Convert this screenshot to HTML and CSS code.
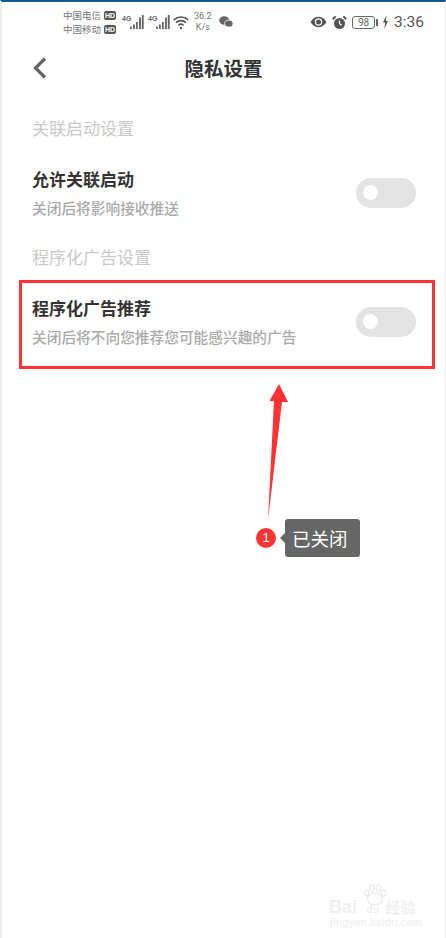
FILE: index.html
```html
<!DOCTYPE html>
<html lang="zh">
<head>
    <meta charset="UTF-8">
    <meta name="viewport" content="width=device-width, initial-scale=1.0">
    <title>隐私设置</title>
    <link rel="stylesheet" href="styles.css">
</head>
<body>
    <div class="screen">
        <div class="status-bar">
            <div class="carriers">
                <div class="carrier">中国电信<span class="hd">HD</span></div>
                <div class="carrier">中国移动<span class="hd">HD</span></div>
            </div>
            <div class="signal">
                <span class="net">4G</span>
                <svg width="15" height="16" viewBox="0 0 15 16"><path d="M0 12.500h1.800v2.500H0zM3 10.500h1.800V15H3zM6 8h1.800v7H6zM9 3.500h1.900V15H9zM11.800 1h1.900v14h-1.900z" fill="#666"/></svg>
            </div>
            <div class="signal">
                <span class="net">4G</span>
                <svg width="15" height="16" viewBox="0 0 15 16"><path d="M0 12.500h1.800v2.500H0zM3 10.500h1.800V15H3zM6 8h1.800v7H6zM9 3.500h1.900V15H9zM11.800 1h1.900v14h-1.900z" fill="#666"/></svg>
            </div>
            <svg class="wifi" width="16" height="15" viewBox="0 0 16 15" fill="none" stroke="#555" stroke-width="1.700"><path d="M.8 5C5 1 11 1 15.200 5M3 7.700C6 5.200 10 5.200 13 7.700M5.400 10.300C7 9 9 9 10.600 10.300"/><circle cx="8" cy="13" r="1.200" fill="#555" stroke="none"/></svg>
            <div class="speed">36.2<br>K/s</div>
            <svg class="wechat" width="14" height="12" viewBox="0 0 14 12"><ellipse cx="5.200" cy="4.500" rx="5" ry="4.200" fill="#666"/><ellipse cx="9.800" cy="7.600" rx="4.200" ry="3.500" fill="#666" stroke="#fff" stroke-width=".8"/></svg>
            <div class="status-right">
                <svg width="17" height="12" viewBox="0 0 17 12"><path d="M.5 6C3 2 5.600.8 8.500.8S14 2 16.500 6C14 10 11.400 11.200 8.500 11.200S3 10 .5 6z" fill="#555"/><circle cx="8.500" cy="6" r="3.700" fill="#fff"/><circle cx="8.500" cy="6" r="2.500" fill="#555"/></svg>
                <svg width="15" height="15" viewBox="0 0 15 15"><circle cx="7.500" cy="8.500" r="5.500" fill="#555"/><path d="M7.500 5.500v3.300l2.300 1.400" fill="none" stroke="#fff" stroke-width="1.100"/><path d="M.8 4.200 3.600 1.400M14.200 4.200 11.400 1.400" stroke="#555" stroke-width="2"/></svg>
                <div class="battery"><span class="battery-level">98</span></div>
                <svg class="bolt" width="7" height="14" viewBox="0 0 7 14"><path d="M4.500 0 1 7.500h2.200L2.300 14 6 6H3.800z" fill="#555"/></svg>
                <span class="clock">3:36</span>
            </div>
        </div>

        <div class="title-bar">
            <svg class="back" width="16" height="24" viewBox="0 0 16 24"><path d="M13 2.500 3.500 12 13 21.500" fill="none" stroke="#666" stroke-width="3.200"/></svg>
            <h1>隐私设置</h1>
        </div>

        <div class="section-label">关联启动设置</div>
        <div class="setting">
            <div>
                <div class="setting-title">允许关联启动</div>
                <div class="setting-desc">关闭后将影响接收推送</div>
            </div>
            <div class="toggle"><span class="knob"></span></div>
        </div>

        <div class="section-label">程序化广告设置</div>
        <div class="setting">
            <div>
                <div class="setting-title">程序化广告推荐</div>
                <div class="setting-desc">关闭后将不向您推荐您可能感兴趣的广告</div>
            </div>
            <div class="toggle"><span class="knob"></span></div>
        </div>

        <!-- annotation layer -->
        <div class="mark-box"></div>
        <svg class="mark-arrow" width="24" height="140" viewBox="0 0 24 140"><path d="M14 0 23 18 17 18 3 136 9 17 4.500 17z" fill="#ff3333"/></svg>
        <div class="mark-num">1</div>
        <div class="mark-tip">已关闭</div>

        <div class="watermark">
            <svg class="paw" width="24" height="22" viewBox="0 0 24 22" fill="none" stroke="#ececec" stroke-width="1.300"><ellipse cx="12" cy="15" rx="7.500" ry="6"/><ellipse cx="3.500" cy="9" rx="2.300" ry="3"/><ellipse cx="9" cy="4" rx="2.300" ry="3"/><ellipse cx="15.500" cy="4" rx="2.300" ry="3"/><ellipse cx="20.500" cy="9" rx="2.300" ry="3"/></svg>
            <div class="wm-logo">Bai<span class="wm-du">du</span><span class="wm-zh">经验</span></div>
            <div class="wm-url">jingyan.baidu.com</div>
        </div>
    </div>
</body>
</html>
```

FILE: styles.css
```css
body {
    margin: 0;
    background: #fff;
    font-family: "Noto Sans CJK SC", "Liberation Sans", sans-serif;
    overflow: hidden;
}

.screen {
    position: relative;
    box-sizing: border-box;
    width: 446px;
    height: 938px;
    border-top: 2px solid #0f5a8a;
    border-left: 2px solid #eeeeee;
    border-right: 1px solid #eeeeee;
    overflow: hidden;
}

.status-bar {
    display: flex;
    align-items: center;
    height: 40px;
    padding-left: 61px;
    padding-right: 21px;
    color: #666;
}

.carriers {
    width: 59px;
    font-size: 9.500px;
    line-height: 14px;
    color: #777;
}

.carrier {
    display: flex;
    align-items: center;
    white-space: nowrap;
}

.hd {
    margin-left: 3px;
    padding: 0 1px;
    background: #555;
    border-radius: 2px;
    color: #fff;
    font-family: "Liberation Sans", sans-serif;
    font-size: 7px;
    line-height: 9px;
    font-weight: bold;
}

.signal {
    display: flex;
    align-items: flex-end;
    width: 26px;
    height: 16px;
}

.net {
    width: 8px;
    font-family: "Liberation Sans", sans-serif;
    font-size: 7px;
    font-weight: bold;
    line-height: 8px;
    align-self: flex-start;
    margin-top: 1px;
}

.wifi {
    margin-left: -1px;
}

.speed {
    margin-left: 5px;
    font-family: "Roboto", sans-serif;
    font-size: 9px;
    line-height: 11px;
    text-align: center;
    color: #777;
}

.wechat {
    margin-left: 7px;
}

.status-right {
    display: flex;
    align-items: center;
    margin-left: auto;
    gap: 5px;
}

.battery {
    position: relative;
    box-sizing: border-box;
    width: 23px;
    height: 13px;
    border: 1px solid #666;
    border-radius: 3px;
    text-align: center;
}

.battery::after {
    content: "";
    position: absolute;
    right: -4px;
    top: 2px;
    width: 2px;
    height: 7px;
    background: #666;
}

.battery-level {
    display: block;
    font-family: "Roboto", sans-serif;
    font-size: 10px;
    line-height: 11px;
    color: #666;
}

.bolt {
    margin-left: 2px;
}

.clock {
    font-family: "Roboto", sans-serif;
    font-size: 15.500px;
    color: #555;
}

.title-bar {
    position: relative;
    display: flex;
    align-items: center;
    justify-content: center;
    height: 50px;
    margin-bottom: 16px;
}

.back {
    position: absolute;
    left: 30px;
    top: 14px;
}

h1 {
    margin: 0;
    font-size: 19.500px;
    font-weight: bold;
    color: #333;
}

.section-label {
    height: 40px;
    padding-left: 30px;
    font-size: 17px;
    line-height: 40px;
    color: #c9c9c9;
}

.setting {
    display: flex;
    align-items: center;
    justify-content: space-between;
    height: 89px;
    padding: 0 29px 0 30px;
}

.setting-title {
    font-size: 17px;
    font-weight: bold;
    line-height: 24px;
    color: #333;
}

.setting-desc {
    margin-top: 6px;
    font-size: 14.700px;
    font-weight: 500;
    line-height: 22px;
    color: #aaa;
}

.toggle {
    box-sizing: border-box;
    display: flex;
    align-items: center;
    width: 60px;
    height: 30px;
    padding-left: 7px;
    background: #e3e3e3;
    border-radius: 15px;
}

.knob {
    width: 15px;
    height: 15px;
    background: #fff;
    border-radius: 50%;
}

.mark-box {
    position: absolute;
    left: 17px;
    top: 278px;
    box-sizing: border-box;
    width: 416px;
    height: 89px;
    border: 3px solid #ff3333;
}

.mark-arrow {
    position: absolute;
    left: 263px;
    top: 382px;
}

.mark-num {
    position: absolute;
    left: 254px;
    top: 526px;
    width: 20px;
    height: 20px;
    background: #ff3333;
    border-radius: 50%;
    color: #fff;
    font-family: "Liberation Sans", sans-serif;
    font-size: 13px;
    line-height: 20px;
    text-align: center;
}

.mark-tip {
    position: absolute;
    left: 283px;
    top: 517px;
    box-sizing: border-box;
    width: 75px;
    height: 38px;
    padding-left: 7px;
    background: #666;
    border-radius: 3px;
    color: #fff;
    font-size: 18.500px;
    line-height: 38px;
}

.mark-tip::before {
    content: "";
    position: absolute;
    left: -5px;
    top: 14px;
    border-top: 5px solid transparent;
    border-bottom: 5px solid transparent;
    border-right: 5px solid #666;
}

.watermark {
    position: absolute;
    left: 326px;
    top: 878px;
    width: 92px;
    height: 56px;
}

.paw {
    position: absolute;
    left: 35px;
    top: 4px;
}

.wm-logo {
    position: absolute;
    left: 1px;
    top: 19px;
    white-space: nowrap;
    font-family: "Liberation Sans", sans-serif;
    font-size: 18px;
    font-weight: bold;
    line-height: 16px;
    color: #f0f0f0;
}

.wm-du {
    font-size: 11px;
    margin: 0 6px 0 9px;
}

.wm-zh {
    font-family: "Noto Sans CJK SC", sans-serif;
    font-size: 15px;
    line-height: 15px;
}

.wm-url {
    position: absolute;
    left: 2px;
    top: 37px;
    font-family: "Liberation Sans", sans-serif;
    font-size: 10.500px;
    line-height: 11px;
    font-weight: bold;
    color: #f2f2f2;
    white-space: nowrap;
}
```
